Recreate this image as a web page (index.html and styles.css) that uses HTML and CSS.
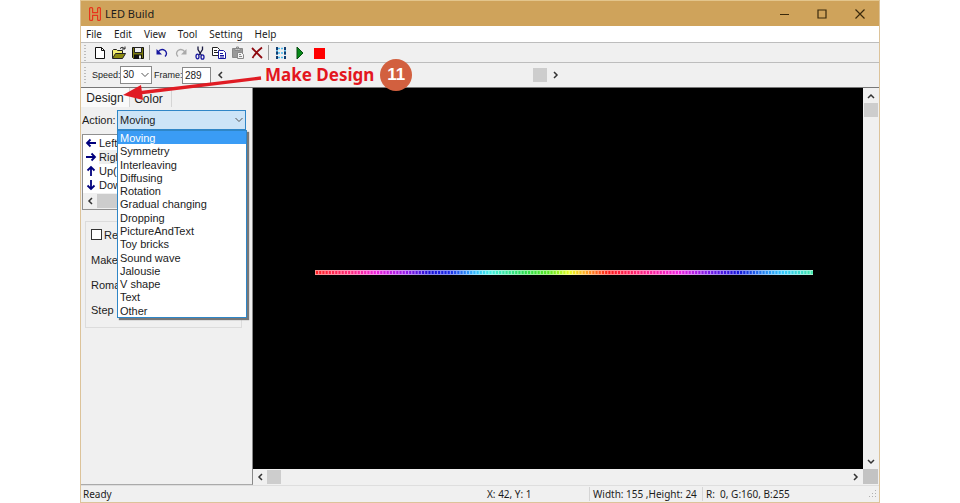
FILE: index.html
```html
<!DOCTYPE html>
<html lang="en">
<head>
<meta charset="utf-8">
<title>LED Build</title>
<link rel="stylesheet" href="styles.css">
</head>
<body>
<div class="window">
  <header class="titlebar">
    <svg class="logo" width="12" height="14" viewBox="0 0 12 14" fill="none" stroke="#e8341c" stroke-width="1.200"><path d="M.6 1.600q0-1 1-1h1q1 0 1 1v4h5v-4q0-1 1-1h1q.8 0 .8 1v11q0 .8-.8.8h-1q-1 0-1-1v-4h-5v4q0 1-1 1h-1q-1 0-1-1z"/></svg>
    <span class="title">LED Build</span>
    <button class="winbtn" aria-label="Minimize"><svg width="10" height="10" viewBox="0 0 10 10" stroke="#3a2a0c" fill="none"><path d="M1 5.500h9"/></svg></button>
    <button class="winbtn" aria-label="Maximize"><svg width="10" height="10" viewBox="0 0 10 10" stroke="#3a2a0c" fill="none"><path d="M1 1h8v8H1z" stroke-width="1.200"/></svg></button>
    <button class="winbtn" aria-label="Close"><svg width="10" height="10" viewBox="0 0 10 10" stroke="#3a2a0c" fill="none"><path d="M.5 .5l9 9M9.500 .5l-9 9" stroke-width="1.200"/></svg></button>
  </header>
  <nav class="menubar">
    <button>File</button><button>Edit</button><button>View</button><button>Tool</button><button>Setting</button><button>Help</button>
  </nav>
  <div class="toolbar">
    <i class="grip"></i>
    <button aria-label="New"><svg width="16" height="16" viewBox="0 0 16 16"><path d="M3.500 2.500h6l3 3v8h-9z" fill="#fff" stroke="#111"/><path d="M9.500 2.500v3h3" fill="none" stroke="#111"/></svg></button>
    <button aria-label="Open"><svg width="16" height="16" viewBox="0 0 16 16"><path d="M1.500 13V5.500l1-1h3l1 1h5V8" fill="#f3ee72" stroke="#222"/><path d="M1.500 13.500L4.500 8.500h10l-3 5z" fill="#8c8a10" stroke="#222"/><path d="M9 3.500q2-2.500 4.500 0M14 1.500v2.500h-3" fill="none" stroke="#222"/></svg></button>
    <button aria-label="Save"><svg width="16" height="16" viewBox="0 0 16 16"><path d="M2.500 2.500h11v11h-10l-1-1z" fill="#77780c" stroke="#111"/><path d="M4.500 2.500h7v5h-7z" fill="#eee" stroke="#222"/><path d="M4 9.500h8v4H4z" fill="#111"/><path d="M9 10.500h2v3H9z" fill="#eee"/></svg></button>
    <i class="sep"></i>
    <button aria-label="Undo"><svg width="16" height="16" viewBox="0 0 16 16"><path d="M4 7q3-4 7-1.500q3 3 0 6" fill="none" stroke="#1717a0" stroke-width="1.300"/><path d="M2.500 4v5.500H8z" fill="#1717a0"/></svg></button>
    <button aria-label="Redo" disabled><svg width="16" height="16" viewBox="0 0 16 16"><path d="M12 7q-3-4-7-1.500q-3 3 0 6" fill="none" stroke="#aaa" stroke-width="1.300"/><path d="M13.500 4v5.500H8z" fill="#aaa"/></svg></button>
    <button aria-label="Cut"><svg width="16" height="16" viewBox="0 0 16 16" fill="none"><path d="M6 1.500v3l3.500 6M10.500 1.500v3L7 10" stroke="#181840" stroke-width="1.300"/><ellipse cx="5.500" cy="11.500" rx="1.500" ry="2.300" stroke="#1717a0" stroke-width="1.300"/><ellipse cx="10.500" cy="12" rx="1.500" ry="2.200" stroke="#1717a0" stroke-width="1.300"/></svg></button>
    <button aria-label="Copy"><svg width="16" height="16" viewBox="0 0 16 16"><path d="M1.500 2.500h5l2 2v6h-7z" fill="#fff" stroke="#222"/><path d="M3 5.500h3M3 7.500h4" stroke="#222"/><path d="M7.500 5.500h5l2 2v6h-7z" fill="#fff" stroke="#1717a0"/><path d="M9 8.500h3M9 10.500h4M9 12h4" stroke="#1717a0"/></svg></button>
    <button aria-label="Paste" disabled><svg width="16" height="16" viewBox="0 0 16 16"><path d="M2.500 3.500h10v9h-10z" fill="#999" stroke="#888"/><path d="M5 3.500h5v2H5zM6.500 2h2v2h-2z" fill="#ddd" stroke="#888"/><path d="M7.500 7.500h4l2 2v4h-6z" fill="#f4f4f4" stroke="#888"/><path d="M9 9.500h2M9 11.500h3" stroke="#888"/></svg></button>
    <button aria-label="Delete"><svg width="16" height="16" viewBox="0 0 16 16"><path d="M3 3l10 10M13 2.500Q8 6 3.500 13" fill="none" stroke="#8e0a10" stroke-width="1.800"/></svg></button>
    <i class="sep"></i>
    <button aria-label="LED layout"><svg width="16" height="16" viewBox="0 0 16 16"><path d="M4 2v12M12 2v12M5 3.500h6M5 8h6M5 12.500h6" stroke="#48b9ee" stroke-width="1.500" stroke-dasharray="2 1"/><path d="M3 2h2v3H3zM3 6.500h2v3H3zM3 11h2v3H3zM11 2h2v3h-2zM11 6.500h2v3h-2zM11 11h2v3h-2z" fill="#123c70"/></svg></button>
    <button aria-label="Play"><svg width="16" height="16" viewBox="0 0 16 16"><path d="M5 2v12l6-6z" fill="#078a18" stroke="#064d10"/></svg></button>
    <button aria-label="Stop"><svg width="16" height="16" viewBox="0 0 16 16"><path d="M3 3h11v11H3z" fill="#f00"/></svg></button>
  </div>
  <div class="playbar">
    <i class="grip"></i>
    <label for="speed">Speed:</label>
    <span class="combo speed"><select id="speed"><option>30</option></select><svg width="8" height="6" viewBox="0 0 8 6" fill="none" stroke="#555"><path d="M.5 1L4 4.500 7.500 1"/></svg></span>
    <label for="frame">Frame:</label>
    <input id="frame" type="text" value="289">
    <div class="track">
      <button aria-label="Previous frame"><svg width="6" height="8" viewBox="0 0 6 8"><path d="M5 1L2 4l3 3"/></svg></button>
      <span class="thumb"></span>
      <button aria-label="Next frame"><svg width="6" height="8" viewBox="0 0 6 8"><path d="M1 1l3 3-3 3"/></svg></button>
    </div>
    <div class="callout">
      <svg class="arrow" width="144" height="26" viewBox="0 0 144 26"><path d="M141 3L18 18" stroke="#e01c24" stroke-width="3.400"/><path d="M3 20L21 10l2 15z" fill="#e01c24"/></svg>
      <strong>Make Design</strong><b class="badge">11</b>
    </div>
  </div>
  <main class="work">
    <aside class="panel">
      <div class="tabs"><button class="active">Design</button><button>Color</button></div>
      <div class="action">
        <label for="action">Action:</label>
        <span class="combo open"><select id="action"><option>Moving</option></select><svg width="8" height="6" viewBox="0 0 8 6" fill="none" stroke="#555"><path d="M.5 1L4 4.500 7.500 1"/></svg>
          <ul class="options">
            <li class="selected">Moving</li><li>Symmetry</li><li>Interleaving</li><li>Diffusing</li><li>Rotation</li><li>Gradual changing</li><li>Dropping</li><li>PictureAndText</li><li>Toy bricks</li><li>Sound wave</li><li>Jalousie</li><li>V shape</li><li>Text</li><li>Other</li>
          </ul>
        </span>
      </div>
      <div class="moves">
        <ul>
          <li><svg width="12" height="12" viewBox="0 0 12 12"><path d="M11 6H2M5.500 2.500L2 6l3.500 3.500"/></svg>Left</li>
          <li><svg width="12" height="12" viewBox="0 0 12 12"><path d="M1 6h9M6.500 2.500L10 6 6.500 9.500"/></svg><span class="current">Righ</span></li>
          <li><svg width="12" height="12" viewBox="0 0 12 12"><path d="M6 11V2M2.500 5.500L6 2l3.500 3.500"/></svg>Up(</li>
          <li><svg width="12" height="12" viewBox="0 0 12 12"><path d="M6 1v9M2.500 6.500L6 10l3.500-3.500"/></svg>Dow</li>
        </ul>
        <div class="hscroll"><button aria-label="Scroll left"><svg width="6" height="8" viewBox="0 0 6 8"><path d="M5 1L2 4l3 3"/></svg></button><span class="thumb"></span></div>
      </div>
      <fieldset class="settings">
        <div class="row"><input type="checkbox" id="rev"><label for="rev">Re</label></div>
        <div class="row"><label for="make">Make</label><input id="make" type="text"></div>
        <div class="row"><label for="roma">Roma</label><input id="roma" type="text"></div>
        <div class="row"><label for="step">Step</label><input id="step" type="text"></div>
      </fieldset>
    </aside>
    <section class="stage">
      <div class="canvas">
        <svg class="strip" viewBox="0 0 155 5" preserveAspectRatio="none" aria-label="LED strip">
          <defs><linearGradient id="hues" gradientUnits="userSpaceOnUse" x1="0" y1="0" x2="155" y2="0">
            <stop offset="0" stop-color="#ff2020"/><stop offset=".07" stop-color="#ff2878"/><stop offset=".12" stop-color="#f020d8"/><stop offset=".18" stop-color="#9818e8"/><stop offset=".23" stop-color="#1810d8"/><stop offset=".27" stop-color="#1828e8"/><stop offset=".32" stop-color="#30b8ff"/><stop offset=".35" stop-color="#40f0e8"/><stop offset=".42" stop-color="#28e050"/><stop offset=".47" stop-color="#58e820"/><stop offset=".51" stop-color="#e8ff20"/><stop offset=".54" stop-color="#ffb020"/><stop offset=".59" stop-color="#ff1818"/><stop offset=".65" stop-color="#ff2078"/><stop offset=".73" stop-color="#f020e0"/><stop offset=".79" stop-color="#7818e8"/><stop offset=".85" stop-color="#1010d8"/><stop offset=".9" stop-color="#2080f0"/><stop offset=".94" stop-color="#30c8ff"/><stop offset="1" stop-color="#40e8a8"/>
          </linearGradient></defs>
          <rect width="155" height="5" fill="url(#hues)"/>
          <rect width="155" height="5" fill="#fff" opacity=".5"/>
          <path d="M.3 2.500L155 2.501" stroke="url(#hues)" stroke-width="3" stroke-dasharray=".65 .35"/>
        </svg>
      </div>
      <div class="vscroll">
        <button aria-label="Scroll up"><svg width="8" height="6" viewBox="0 0 8 6"><path d="M1 5l3-3 3 3"/></svg></button>
        <span class="thumb"></span>
        <button class="end" aria-label="Scroll down"><svg width="8" height="6" viewBox="0 0 8 6"><path d="M1 1l3 3 3-3"/></svg></button>
      </div>
      <div class="hscroll">
        <button aria-label="Scroll left"><svg width="6" height="8" viewBox="0 0 6 8"><path d="M5 1L2 4l3 3"/></svg></button>
        <span class="thumb"></span>
        <button class="end" aria-label="Scroll right"><svg width="6" height="8" viewBox="0 0 6 8"><path d="M1 1l3 3-3 3"/></svg></button>
      </div>
      <div class="corner"></div>
    </section>
  </main>
  <footer class="status">
    <span class="ready">Ready</span>
    <span class="coords">X: 42, Y: 1</span>
    <span class="size">Width: 155 ,Height: 24</span>
    <span class="rgb">R:&nbsp; 0, G:160, B:255</span>
    <svg width="8" height="8" viewBox="0 0 8 8" fill="#b0b0b0"><path d="M6 0h1v1H6zM3 3h1v1H3zM6 3h1v1H6zM0 6h1v1H0zM3 6h1v1H3zM6 6h1v1H6z"/></svg>
  </footer>
</div>
</body>
</html>
```
FILE: styles.css
```css
* { box-sizing: border-box; }
body { margin: 0; background: #fff; color: #1c1c1c; font: 10px/14px "Noto Sans", sans-serif; }
button { margin: 0; padding: 0; border: 0; background: none; color: inherit; font: inherit; display: flex; align-items: center; justify-content: center; flex: none; }
ul { list-style: none; margin: 0; padding: 0; }
select, input[type="text"] { appearance: none; margin: 0; border: 1px solid #8a8a8a; border-radius: 0; background: #fff; color: #1c1c1c; font: inherit; padding: 0 2px; }

.window { margin: 0 80px; height: 100vh; display: flex; flex-direction: column; background: #f0f0f0; border: 1px solid #dcc39a; border-top-color: #e3c58c; }

.titlebar { display: flex; align-items: center; height: 25px; flex: none; background: #cfa35b; padding: 0 0 0 8px; }
.title { flex: 1; margin-left: 4px; font-size: 11px; }
.winbtn { width: 38px; height: 24px; }

.menubar { display: flex; gap: 12px; height: 17px; flex: none; align-items: center; padding-left: 5px; background: #fff; border-bottom: 1px solid #bdbdbd; }

.grip { width: 2px; height: 16px; margin: 0 4px 0 3px; flex: none; background: repeating-linear-gradient(#bcbcbc 0 1px, transparent 1px 3px); }
.toolbar { display: flex; align-items: center; height: 20px; flex: none; border-bottom: 1px solid #bdbdbd; }
.toolbar button { width: 19px; height: 19px; }
.sep { width: 5px; height: 15px; border-left: 2px solid transparent; background: linear-gradient(90deg, #999 1px, transparent 1px) padding-box no-repeat; }

.playbar { position: relative; display: flex; align-items: center; height: 25px; flex: none; font: 10px/14px "Liberation Sans", sans-serif; border-bottom: 1px solid #777; }
.playbar > label { width: 30px; padding-left: 2px; font-size: 9px; }
.combo { position: relative; display: flex; }
.combo > svg { position: absolute; right: 3px; top: 50%; margin-top: -3px; pointer-events: none; }
.combo select { width: 100%; height: 100%; }
.speed { width: 32px; height: 18px; }
#frame { width: 29px; height: 17px; }
.track { display: flex; align-items: center; width: 353px; height: 17px; }
.track button { width: 17px; height: 15px; }
.track .thumb { margin-left: auto; }
.thumb { flex: none; width: 14px; height: 14px; background: #cdcdcd; }
.track path, .hscroll path, .vscroll path { fill: none; stroke: #333; stroke-width: 1.5; }

.callout { position: absolute; z-index: 5; left: 184px; top: -4px; display: flex; align-items: center; color: #e3161e; font: 17px/32px "Noto Sans", sans-serif; }
.badge { width: 32px; height: 32px; margin-left: 6px; border-radius: 50%; background: #d2603f; color: #fff; font: bold 17px/31px "Liberation Sans", sans-serif; text-align: center; }
.arrow { position: absolute; right: calc(100% + 1px); top: 16px; }

.work { display: flex; flex: 1; min-height: 0; }
.panel { width: 172px; flex: none; border-right: 1px solid #888; border-bottom: 1px solid #aaa; font: 12px/14px "Liberation Sans", sans-serif; }
.tabs { display: flex; height: 19px; align-items: flex-end; }
.tabs button { width: 42px; height: 17px; padding-right: 4px; border-right: 1px solid #d5d5d5; }
.tabs .active { width: 49px; height: 19px; padding: 0; background: #fafafa; }
.action { display: flex; align-items: center; margin-top: 3px; padding: 0 6px 0 1px; }
.action label { width: 35px; font-size: 11px; line-height: 20px; flex: none; }
.open { flex: 1; height: 20px; }
.open select { background: #cce4f7; border-color: #2f86c7; font-size: 11px; }
.options { position: absolute; z-index: 3; top: 20px; left: 0; right: -1px; height: 188px; display: flex; flex-direction: column; background: #fff; border: 1px solid #2f86c7; box-shadow: 2px 2px 1px #777; font-size: 11px; line-height: 14px; }
.options li { flex: 1; min-height: 0; padding-left: 2px; }
.options .selected { background: #3a9cf5; color: #fff; }

.moves { margin: 4px 6px 0 1px; height: 76px; padding-top: 1px; border: 1px solid #909090; background: #fff; font-size: 11px; overflow: hidden; }
.moves li { display: flex; align-items: center; height: 14px; gap: 2px; padding-left: 2px; }
.moves li path { stroke: #00007d; stroke-width: 1.8; fill: none; }
.current { background: #eee; }
.moves .hscroll { height: 16px; margin-top: 1px; background: #f0f0f0; }
.moves .thumb { width: 100px; }

.settings { margin: 11px 10px 0 4px; height: 107px; padding: 0 5px; border: 1px solid #dcdcdc; font-size: 11px; }
.row { display: flex; align-items: center; height: 25px; }
.row label { width: 66px; }
.row input[type="text"] { width: 77px; height: 17px; }
.row input[type="checkbox"] { appearance: none; flex: none; width: 11px; height: 11px; margin: 0 2px 0 0; border: 1px solid #333; background: #fff; }

.stage { flex: 1; min-width: 0; display: grid; grid-template: 1fr 15px / 1fr 16px; padding-bottom: 1px; }
.canvas { background: #000; display: flex; padding: 182px 50px 0 62px; }
.strip { width: 100%; height: 5px; }
.vscroll { display: flex; flex-direction: column; align-items: center; }
.vscroll button { width: 16px; height: 15px; }
.hscroll { display: flex; align-items: center; }
.hscroll button { width: 14px; height: 15px; }
.end { margin-left: auto; }
.vscroll .end { margin: auto 0 0; }
.corner { background: #c3c3c3; margin-right: 1px; }

.status { display: flex; align-items: center; height: 17px; flex: none; border-top: 1px solid #dedede; padding: 0 2px; }
.status span { white-space: nowrap; }
.ready { flex: 1; }
.coords { width: 102px; }
.size { width: 113px; padding-left: 3px; border-left: 1px solid #d5d5d5; }
.rgb { width: 167px; padding-left: 3px; border-left: 1px solid #d5d5d5; }
```
